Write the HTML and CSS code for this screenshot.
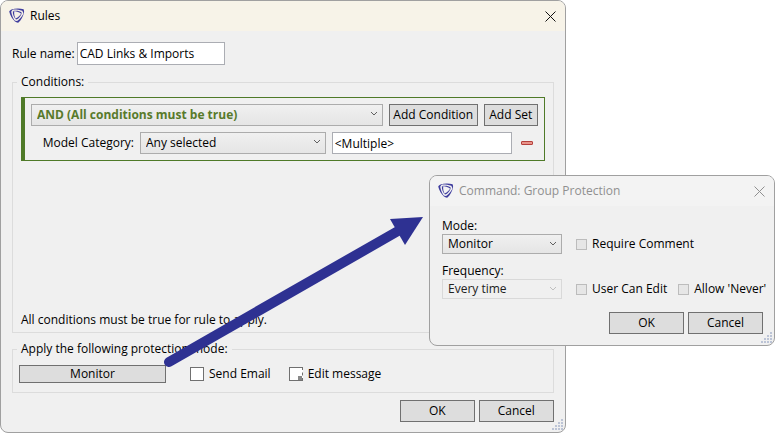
FILE: index.html
```html
<!DOCTYPE html>
<html lang="en">
<head>
    <meta charset="UTF-8">
    <meta name="viewport" content="width=device-width, initial-scale=1.0">
    <title>Rules</title>
    <link rel="stylesheet" href="styles.css">
</head>
<body>
    <svg class="symbols">
        <symbol id="logo" viewBox="0 0 16 16">
            <g id="blade">
                <path d="M2.500 1.500C6 .2 11 .1 14.600 1.300C15.300 2.800 15.200 4.600 14.600 6.200C14.300 4.600 13.900 3.600 13.200 2.800C10 1.500 6 1.200 2.500 1.500z" />
                <path d="M3.500 3.200C7 2.300 10.500 2.800 12.600 4.400L12.200 5.800C9.800 3.800 7 3.200 3.500 3.200z" />
            </g>
            <use href="#blade" transform="rotate(120 8 6.500)" />
            <use href="#blade" transform="rotate(240 8 6.500)" />
        </symbol>
        <symbol id="close" viewBox="0 0 11 11">
            <path d="M.5.5l10 10M10.500.5l-10 10" />
        </symbol>
        <symbol id="chevron" viewBox="0 0 8 6">
            <path d="M1 1l3 3 3-3" />
        </symbol>
        <symbol id="grip" viewBox="0 0 12 12">
            <path d="M9 0h2v2h-2zM9 3h2v2h-2zM9 6h2v2h-2zM9 9h2v2h-2zM6 3h2v2h-2zM6 6h2v2h-2zM6 9h2v2h-2zM3 6h2v2h-2zM3 9h2v2h-2zM0 9h2v2h-2z" />
        </symbol>
    </svg>

    <main class="desktop">
        <section class="window rules">
            <header class="title-bar">
                <svg class="logo"><use href="#logo" /></svg>
                <h1>Rules</h1>
                <button class="close" aria-label="Close"><svg><use href="#close" /></svg></button>
            </header>
            <form class="content">
                <div class="rule-name">
                    <label for="ruleName">Rule name:</label>
                    <input type="text" id="ruleName" value="CAD Links &amp; Imports">
                </div>

                <fieldset class="conditions">
                    <legend>Conditions:</legend>
                    <div class="condition-list">
                        <div class="condition-set">
                            <div class="row">
                                <div class="select operator">
                                    <select aria-label="Operator">
                                        <option>AND (All conditions must be true)</option>
                                    </select>
                                    <svg><use href="#chevron" /></svg>
                                </div>
                                <button type="button" class="add-condition">Add Condition</button>
                                <button type="button" class="add-set">Add Set</button>
                            </div>
                            <div class="row condition">
                                <label for="category">Model Category:</label>
                                <div class="select category">
                                    <select id="category">
                                        <option>Any selected</option>
                                    </select>
                                    <svg><use href="#chevron" /></svg>
                                </div>
                                <input type="text" class="value" aria-label="Value" value="&lt;Multiple&gt;">
                                <button type="button" class="remove" aria-label="Remove condition"></button>
                            </div>
                        </div>
                        <p>All conditions must be true for rule to apply.</p>
                    </div>
                </fieldset>

                <fieldset class="protection">
                    <legend>Apply the following protection mode:</legend>
                    <button type="button" class="mode">Monitor</button>
                    <label class="check send"><input type="checkbox"> Send Email</label>
                    <label class="check edit"><input type="checkbox"> Edit message</label>
                </fieldset>

                <div class="buttons">
                    <button type="button">OK</button>
                    <button type="button">Cancel</button>
                </div>
            </form>
            <svg class="grip"><use href="#grip" /></svg>
        </section>

        <section class="window command">
            <header class="title-bar">
                <svg class="logo"><use href="#logo" /></svg>
                <h2>Command: Group Protection</h2>
                <button class="close" aria-label="Close"><svg><use href="#close" /></svg></button>
            </header>
            <form class="content">
                <label class="field-label" for="mode">Mode:</label>
                <div class="row">
                    <div class="select">
                        <select id="mode">
                            <option>Monitor</option>
                        </select>
                        <svg><use href="#chevron" /></svg>
                    </div>
                    <label class="check"><input type="checkbox" disabled> Require Comment</label>
                </div>
                <label class="field-label" for="frequency">Frequency:</label>
                <div class="row">
                    <div class="select disabled">
                        <select id="frequency" disabled>
                            <option>Every time</option>
                        </select>
                        <svg><use href="#chevron" /></svg>
                    </div>
                    <label class="check"><input type="checkbox" disabled> User Can Edit</label>
                    <label class="check"><input type="checkbox" disabled> Allow 'Never'</label>
                </div>
                <div class="buttons">
                    <button type="button">OK</button>
                    <button type="button">Cancel</button>
                </div>
            </form>
            <svg class="grip"><use href="#grip" /></svg>
        </section>

        <!-- points from the Monitor button to the dialog it opens -->
        <svg class="arrow" viewBox="0 0 264 156">
            <path class="shaft" d="M9 147L238 16" />
            <path class="head" d="M230 4L263 2L245 30z" />
        </svg>
    </main>
</body>
</html>
```

FILE: styles.css
```css
* {
    box-sizing: border-box;
    margin: 0;
    padding: 0;
}
body {
    background-color: #fff;
    color: #000;
    font-family: "Open Sans", "Noto Sans", sans-serif;
    font-size: 12px;
    line-height: 16px;
}
h1, h2 {
    font-size: 12px;
    font-weight: normal;
}
.symbols {
    position: absolute;
    width: 0;
    height: 0;
}
.desktop {
    position: relative;
    min-height: 100vh;
}

/* windows */
.window {
    display: flex;
    flex-direction: column;
    border: 1px solid #a0a0a0;
    border-radius: 8px;
    background-color: #f0f0f0;
    overflow: hidden;
}
.rules {
    position: relative;
    width: 73%;
    min-height: calc(100vh - 1px);
}
.command {
    position: absolute;
    top: 175px;
    right: 0;
    width: 346px;
}
.title-bar {
    display: flex;
    align-items: center;
    height: 30px;
    padding: 0 9px 0 8px;
    background-color: #f7f3e8;
}
.command .title-bar {
    background-color: #f3f3f3;
    color: #909090;
}
.logo {
    width: 16px;
    height: 16px;
    margin-right: 5px;
    fill: #3f3d9e;
}
.close {
    width: 11px;
    height: 11px;
    margin-left: auto;
    border: none;
    background: none;
}
.close svg {
    display: block;
    width: 11px;
    height: 11px;
    fill: none;
    stroke: #111;
}
.command .close svg {
    stroke: #909090;
}
.grip {
    position: absolute;
    right: 1px;
    bottom: 1px;
    width: 12px;
    height: 12px;
    fill: #bcc4d6;
}
.content {
    flex: 1;
    display: flex;
    flex-direction: column;
    padding: 11px 11px 10px;
}

/* controls */
button, input, select {
    font: inherit;
    color: inherit;
}
button {
    height: 22px;
    border: 1px solid #707070;
    background-color: #ddd;
}
input[type="text"] {
    height: 22px;
    padding: 0 2px;
    border: 1px solid #abadb3;
    background-color: #fff;
}
.select {
    position: relative;
}
.select select {
    display: block;
    width: 100%;
    height: 22px;
    padding: 0 5px;
    appearance: none;
    border: 1px solid #acacac;
    border-radius: 0;
    background: linear-gradient(#f0f0f0, #e5e5e5);
}
.select svg {
    position: absolute;
    top: 7px;
    right: 5px;
    width: 8px;
    height: 6px;
    fill: none;
    stroke: #606060;
    pointer-events: none;
}
.row {
    display: flex;
    align-items: center;
    gap: 6px;
}
.check {
    display: flex;
    align-items: center;
    gap: 5px;
    white-space: nowrap;
}
.check input {
    width: 14px;
    height: 14px;
    appearance: none;
    border: 1px solid #707070;
    background-color: #fff;
}
.buttons {
    display: flex;
    justify-content: flex-end;
    gap: 4px;
}
.buttons button {
    width: 75px;
}

/* rules */
.rule-name {
    display: flex;
    align-items: center;
    gap: 2px;
}
.rule-name input {
    width: 148px;
    height: 23px;
}
fieldset {
    border: 1px solid #dcdcdc;
}
legend {
    margin-left: -4px;
    padding: 0 4px;
}
.conditions {
    margin-top: 9px;
    padding: 7px 8px 4px;
}
.condition-list {
    display: flex;
    flex-direction: column;
    justify-content: space-between;
    min-height: calc(100vh - 203px);
}
.condition-set {
    display: flex;
    flex-direction: column;
    gap: 6px;
    padding: 6px;
    border: 1px solid #4f7a28;
    border-left-width: 4px;
}
.operator {
    flex: 1;
}
.operator select {
    color: #587a2b;
    font-weight: bold;
}
.add-condition {
    width: 89px;
}
.add-set {
    width: 54px;
}
.condition label {
    width: 103px;
    text-align: right;
}
.category {
    flex: 1;
}
.condition .value {
    width: 180px;
}
.remove {
    width: 12px;
    height: 4px;
    margin: 0 5px 0 3px;
    border-color: #b5403c;
    border-radius: 1px;
    background-color: #e8938a;
}
.protection {
    display: flex;
    align-items: center;
    margin-top: 8px;
    padding: 8px 6px 9px;
}
.protection legend {
    margin-left: -2px;
}
.protection .mode {
    width: 147px;
    height: 18px;
    line-height: 14px;
}
.send {
    margin-left: 24px;
}
.edit {
    margin-left: 18px;
}
.edit input {
    background: linear-gradient(#888, #888) right bottom / 4px 4px no-repeat, #fff;
    border-right-style: dashed;
}
.rules .buttons {
    margin-top: 7px;
}

/* command */
.command .content {
    padding: 12px 11px 11px 12px;
}
.command .row + .field-label {
    margin-top: 9px;
}
.command .select {
    flex: none;
    width: 120px;
    margin-right: 8px;
}
.command .select select {
    height: 20px;
}
.command .row .check + .check {
    margin-left: 5px;
}
.command .check input {
    width: 11px;
    height: 11px;
    border-color: #bcbcbc;
    background-color: #e6e6e6;
}
.command .disabled select {
    border-color: #d9d9d9;
    background: #f0f0f0;
    color: #222;
    opacity: 1;
}
.command .disabled svg {
    stroke: #bfbfbf;
}
.command .buttons {
    margin-top: 13px;
}

.arrow {
    position: absolute;
    top: 215px;
    left: 160px;
    width: 264px;
    height: 156px;
    pointer-events: none;
}
.shaft {
    fill: none;
    stroke: #2e3192;
    stroke-width: 10;
    stroke-linecap: round;
}
.head {
    fill: #2e3192;
}
```
